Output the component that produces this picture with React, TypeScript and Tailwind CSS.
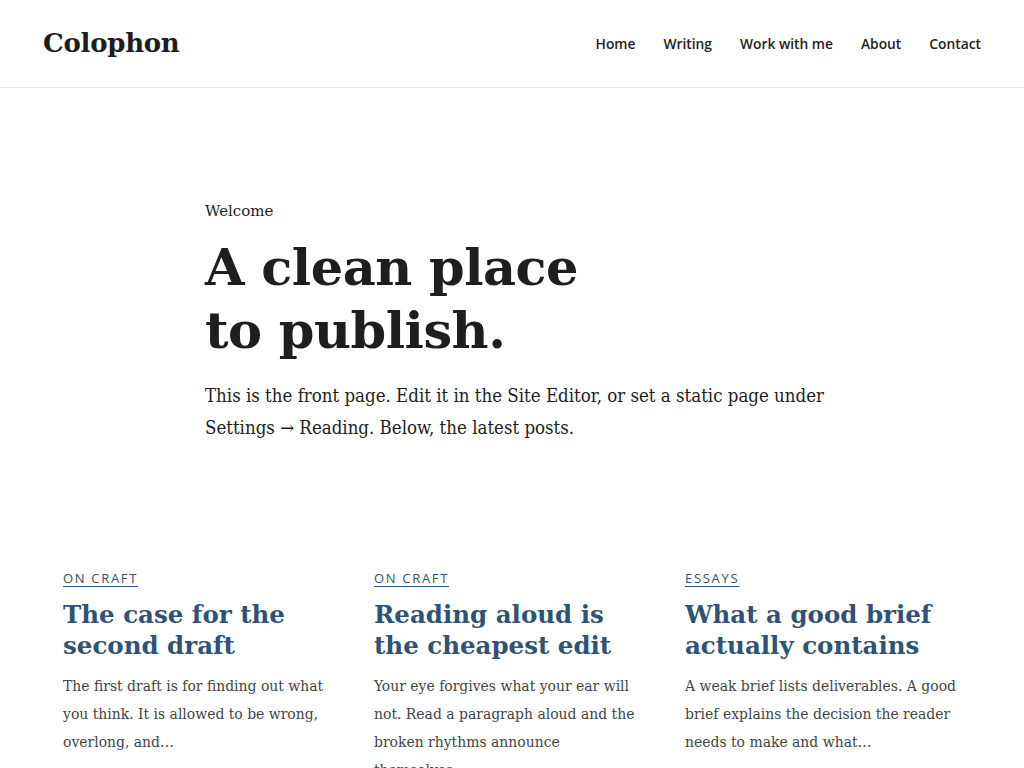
const serif = "font-['DejaVu_Serif',Georgia,serif]";
const bodySerif = "font-['DejaVu_Serif_Condensed','DejaVu_Serif',Georgia,serif]";

const nav = ['Home', 'Writing', 'Work with me', 'About', 'Contact'];

const posts = [
  {
    cat: 'On craft',
    title: 'The case for the second draft',
    excerpt: 'The first draft is for finding out what you think. It is allowed to be wrong, overlong, and…',
  },
  {
    cat: 'On craft',
    title: 'Reading aloud is the cheapest edit',
    excerpt: 'Your eye forgives what your ear will not. Read a paragraph aloud and the broken rhythms announce themselves;',
  },
  {
    cat: 'Essays',
    title: 'What a good brief actually contains',
    excerpt: 'A weak brief lists deliverables. A good brief explains the decision the reader needs to make and what…',
  },
];

export default function App() {
  return (
    <div className="min-h-screen bg-white text-[#1e1e1e]">
      <header className="h-[88px] border-b border-[#e6e6e6] flex items-center justify-between px-[43px]">
        <a href="#" className={`${serif} text-[26px] font-bold tracking-[-0.01em] text-[#1e1e1e]`}>
          Colophon
        </a>
        <nav className="flex items-center gap-[28px] pt-[2px] font-['Open_Sans',sans-serif] text-[13.8px] font-semibold text-[#1e1e1e]">
          {nav.map((n) => (
            <a key={n} href="#">{n}</a>
          ))}
        </nav>
      </header>

      <section className="pl-[205px] pt-[112px] pb-[121px]">
        <p className={`${serif} text-[15px] text-[#1e1e1e]`}>Welcome</p>
        <h1 className={`${serif} mt-[13px] text-[51px] leading-[63px] font-bold tracking-[-0.01em]`}>
          A clean place
          <br />
          to publish.
        </h1>
        <p className={`${bodySerif} mt-[18px] text-[18.5px] leading-[32px] text-[#1e1e1e] max-w-[620px]`}>
          This is the front page. Edit it in the Site Editor, or set a static page under Settings → Reading. Below,
          the latest posts.
        </p>
      </section>

      <section className="px-[63px] grid grid-cols-3 gap-[35px]">
        {posts.map((p) => (
          <article key={p.title}>
            <a
              href="#"
              className="font-['Open_Sans',sans-serif] text-[13px] font-medium uppercase tracking-[0.13em] text-[#2f5275] underline underline-offset-[3px]"
            >
              {p.cat}
            </a>
            <h2 className={`${serif} mt-[10px] text-[24.5px] leading-[31px] font-bold text-[#2f5275]`}>{p.title}</h2>
            <p className={`${bodySerif} mt-[11px] pr-[4px] text-[15.5px] leading-[28px] text-[#444]`}>{p.excerpt}</p>
          </article>
        ))}
      </section>
    </div>
  );
}
